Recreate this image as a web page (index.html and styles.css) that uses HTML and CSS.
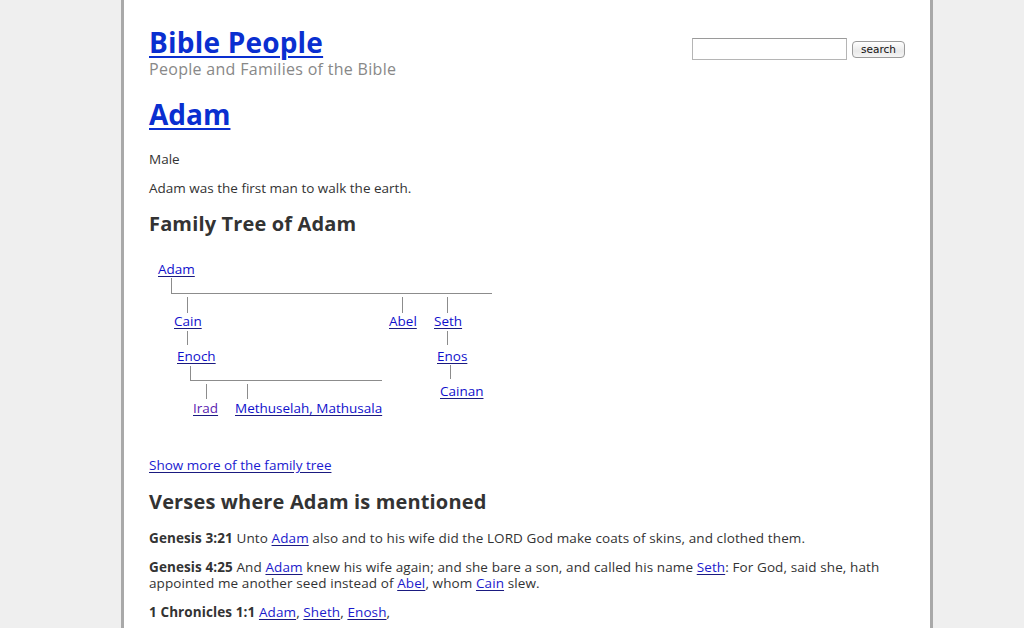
FILE: index.html
```html
<!DOCTYPE html>
<html>
<head>
<meta charset="utf-8">
<title>Adam - Bible People</title>
<link rel="stylesheet" href="styles.css">
</head>
<body>
<div class="page">
  <header class="header">
    <div class="brand">
      <a class="site-title" href="#">Bible People</a>
      <div class="tagline">People and Families of the Bible</div>
    </div>
    <form class="search">
      <input class="search-input" type="text">
      <button class="search-btn" type="button">search</button>
    </form>
  </header>

  <h1 class="person"><a href="#">Adam</a></h1>
  <p class="text first">Male</p>
  <p class="text">Adam was the first man to walk the earth.</p>

  <h2 class="section">Family Tree of Adam</h2>
  <div class="tree">
    <a class="node n-adam" href="#">Adam</a>
    <span class="vl l-adam"></span>
    <span class="hl h-adam"></span>
    <span class="vl l-cain"></span>
    <span class="vl l-abel"></span>
    <span class="vl l-seth"></span>
    <a class="node n-cain" href="#">Cain</a>
    <a class="node n-abel" href="#">Abel</a>
    <a class="node n-seth" href="#">Seth</a>
    <span class="vl l-cain2"></span>
    <span class="vl l-seth2"></span>
    <a class="node n-enoch" href="#">Enoch</a>
    <a class="node n-enos" href="#">Enos</a>
    <span class="vl l-enoch"></span>
    <span class="hl h-enoch"></span>
    <span class="vl l-irad"></span>
    <span class="vl l-meth"></span>
    <span class="vl l-enos"></span>
    <a class="node n-cainan" href="#">Cainan</a>
    <a class="node n-irad visited" href="#">Irad</a>
    <a class="node n-meth" href="#">Methuselah, Mathusala</a>
  </div>
  <p class="text more"><a class="plain" href="#">Show more of the family tree</a></p>

  <h2 class="section verses-title">Verses where Adam is mentioned</h2>
  <p class="text verse first"><b>Genesis 3:21</b> Unto <a href="#">Adam</a> also and to his wife did the LORD God make coats of skins, and clothed them.</p>
  <p class="text verse"><b>Genesis 4:25</b> And <a href="#">Adam</a> knew his wife again; and she bare a son, and called his name <a href="#">Seth</a>: For God, said she, hath appointed me another seed instead of <a href="#">Abel</a>, whom <a href="#">Cain</a> slew.</p>
  <p class="text verse"><b>1 Chronicles 1:1</b> <a href="#">Adam</a>, <a href="#">Sheth</a>, <a href="#">Enosh</a>,</p>
</div>
</body>
</html>
```

FILE: styles.css
```css
html, body {
  margin: 0;
  padding: 0;
  background: #efefef;
}
body {
  font-family: "Open Sans", "DejaVu Sans", sans-serif;
  color: #333;
  font-size: 13.5px;
  line-height: 16px;
}
a {
  color: #0f0fcc;
  text-decoration: underline;
  text-decoration-color: #1a1a80;
  text-underline-offset: 2px;
}
.page {
  width: 756px;
  margin-left: 121px;
  background: #fff;
  border-left: 3px solid #a9a9a9;
  border-right: 3px solid #a9a9a9;
  padding: 26px 25px 40px 25px;
  min-height: 700px;
}
.header {
  display: flex;
  justify-content: space-between;
  align-items: flex-start;
}
.brand {
  display: flex;
  flex-direction: column;
}
.site-title {
  font-size: 28px;
  line-height: 32px;
  font-weight: bold;
  color: #0a2fd0;
  text-decoration-color: #0a2fd0;
  text-underline-offset: 3px;
  text-decoration-thickness: 2px;
  letter-spacing: 0.2px;
}
.tagline {
  font-size: 16px;
  line-height: 20px;
  margin-top: 1px;
  color: #888;
  letter-spacing: 0.3px;
}
.search {
  display: flex;
  align-items: center;
  gap: 5px;
  margin-top: 12px;
}
.search-input {
  width: 151px;
  height: 18px;
  margin: 0;
  padding: 1px;
  border: 1px solid #b5b5b5;
  border-top-color: #9a9a9a;
  background: #fff;
  box-sizing: content-box;
}
.search-btn {
  height: 17px;
  width: 53px;
  padding: 0;
  margin: 0;
  font-family: "DejaVu Sans", sans-serif;
  font-size: 10.5px;
  line-height: 15px;
  color: #111;
  border: 1px solid #9a9a9a;
  border-radius: 4px;
  background: linear-gradient(#ffffff, #e9e9e9 60%, #f5f5f5);
}
.person {
  margin: 19px 0 0 0;
  font-size: 28px;
  line-height: 32px;
  font-weight: bold;
}
.person a {
  color: #0a2fd0;
  text-decoration-color: #0a2fd0;
  text-underline-offset: 3px;
  text-decoration-thickness: 2px;
}
.text {
  margin: 13px 0 0 0;
}
.text.first {
  margin-top: 21px;
}
.section {
  margin: 16px 0 0 0;
  font-size: 20px;
  line-height: 24px;
  font-weight: bold;
  color: #333;
  letter-spacing: 0.15px;
}
.tree {
  position: relative;
  height: 211px;
  margin-top: 10px;
}
.node {
  position: absolute;
  white-space: nowrap;
  line-height: 16px;
}
.visited {
  color: #5a22b0;
}
.vl, .hl {
  position: absolute;
  background: #8c8c8c;
}
.vl { width: 1px; }
.hl { height: 1px; }

.n-adam { left: 9px; top: 15px; }
.l-adam { left: 22px; top: 32px; height: 15px; }
.h-adam { left: 22px; top: 47px; width: 321px; }
.l-cain { left: 38px; top: 51px; height: 16px; }
.l-abel { left: 253px; top: 51px; height: 16px; }
.l-seth { left: 298px; top: 51px; height: 16px; }
.n-cain { left: 25px; top: 67px; }
.n-abel { left: 240px; top: 67px; }
.n-seth { left: 285px; top: 67px; }
.l-cain2 { left: 38px; top: 85px; height: 14px; }
.l-seth2 { left: 298px; top: 85px; height: 14px; }
.n-enoch { left: 28px; top: 102px; }
.n-enos { left: 288px; top: 102px; }
.l-enoch { left: 41px; top: 120px; height: 15px; }
.h-enoch { left: 41px; top: 134px; width: 192px; }
.l-irad { left: 57px; top: 138px; height: 15px; }
.l-meth { left: 98px; top: 138px; height: 15px; }
.l-enos { left: 301px; top: 119px; height: 14px; }
.n-cainan { left: 291px; top: 137px; }
.n-irad { left: 44px; top: 154px; }
.n-meth { left: 86px; top: 154px; }

.more { margin-top: 0; }
.plain { color: #1a1ad0; }
.verses-title { margin-top: 17px; }
.verse { letter-spacing: 0.1px; }
.verse.first { margin-top: 16px; }
.verse b { font-weight: bold; }
.verse a { color: #1a1acc; }
```
